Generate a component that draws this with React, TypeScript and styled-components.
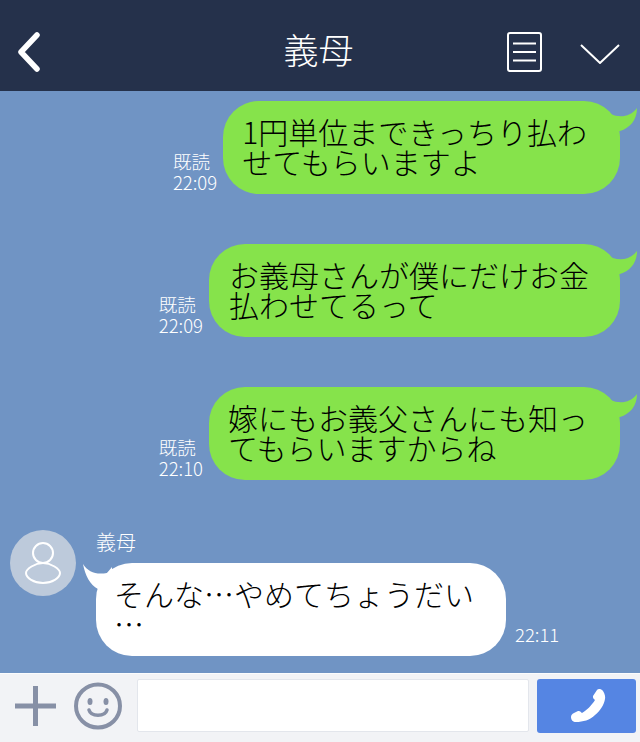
import React from 'react'
import styled, { createGlobalStyle } from 'styled-components'

const GlobalStyle = createGlobalStyle`
  html, body { margin: 0; padding: 0; }
  body { font-family: "Noto Sans CJK JP", "Noto Sans", sans-serif; background: #7094c4; }
`

const Screen = styled.div`
  width: 640px;
  height: 742px;
  display: flex;
  flex-direction: column;
  overflow: hidden;
`

const Header = styled.header`
  height: 91px;
  flex: none;
  box-sizing: border-box;
  background: #25314b;
  display: grid;
  grid-template-columns: 1fr auto 1fr;
  align-items: center;
  padding: 12px 20px 0 17px;
  color: #fff;
`

const Title = styled.div`
  font-size: 35px;
  font-weight: 300;
  line-height: 1;
  padding: 0 0 6px 0;
`

const HeaderIcons = styled.div`
  display: flex;
  justify-content: flex-end;
  align-items: center;
  gap: 38px;
`

const DownArrow = styled.svg`
  margin-top: 5px;
`

const Chat = styled.main`
  flex: 1;
  display: flex;
  flex-direction: column;
  gap: 50px;
  padding: 10px 0 0;
`

const MyRow = styled.div`
  display: flex;
  justify-content: flex-end;
  align-items: flex-end;
  gap: 6px;
  padding-right: 20px;
`

const Meta = styled.div`
  color: #fff;
  font-size: 18.5px;
  line-height: 21px;
  font-weight: 300;
  padding-bottom: 1px;
`

const Bubble = styled.div<{ $mine?: boolean; $left: number; $right: number }>`
  position: relative;
  background: ${p => (p.$mine ? '#86e34b' : '#fff')};
  color: #000;
  font-size: 30px;
  line-height: 30px;
  font-weight: 300;
  height: 93px;
  box-sizing: border-box;
  padding: 15px ${p => p.$right}px 0 ${p => p.$left}px;
  border-radius: 36px;
  white-space: nowrap;
`

const Tail = styled.svg<{ $mine?: boolean }>`
  position: absolute;
  ${p => (p.$mine ? 'top: 4px; right: -20px;' : 'top: 0; left: -14px;')}
`

const TheirRow = styled.div`
  display: flex;
  gap: 20px;
  padding-left: 10px;
`

const Avatar = styled.div`
  width: 66px;
  height: 66px;
  flex: none;
  border-radius: 50%;
  background: #bdcadb;
  display: flex;
  align-items: center;
  justify-content: center;
`

const TheirColumn = styled.div`
  display: flex;
  flex-direction: column;
`

const Name = styled.div`
  color: #fff;
  font-size: 20px;
  line-height: 24px;
  height: 33px;
  font-weight: 300;
`

const BubbleLine = styled.div`
  display: flex;
  align-items: flex-end;
  gap: 9px;
`

const TheirTime = styled(Meta)`
  padding-bottom: 11px;
`

const Footer = styled.footer`
  height: 69px;
  flex: none;
  box-sizing: border-box;
  background: #f2f3f6;
  border-top: 1px solid #fbfcfd;
  display: flex;
  align-items: center;
  padding: 0 4px 5px 15px;
`

const Input = styled.div`
  width: 392px;
  height: 53px;
  background: #fff;
  border: 1px solid #e3e6ec;
  box-sizing: border-box;
  border-radius: 2px;
  margin-left: 15px;
`

const CallButton = styled.div`
  width: 99px;
  height: 54px;
  margin: 1px 0 0 8px;
  padding-left: 3px;
  box-sizing: border-box;
  background: #5585e3;
  border-radius: 3px;
  display: flex;
  align-items: center;
  justify-content: center;
`

const Smile = styled.svg`
  margin-left: 18px;
`

const MineTail = () => (
  <Tail $mine width="40" height="30" viewBox="0 0 40 30">
    <path d="M2 3 C12 13 28 15 37 3 C37 15 30 23 20 26 L2 26 Z" fill="#86e34b" />
  </Tail>
)

const messages = [
  { time: '22:09', left: 19, right: 33, lines: ['1円単位まできっちり払わ', 'せてもらいますよ'] },
  { time: '22:09', left: 20, right: 31, lines: ['お義母さんが僕にだけお金', '払わせてるって'] },
  { time: '22:10', left: 19, right: 32, lines: ['嫁にもお義父さんにも知っ', 'てもらいますからね'] },
]

const App: React.FC = () => (
  <Screen>
    <GlobalStyle />
    <Header>
      <svg width="24" height="40" viewBox="0 0 24 40">
        <path d="M20 3 L4 20 L20 37" fill="none" stroke="#fff" strokeWidth="5.5" strokeLinecap="round" strokeLinejoin="round" />
      </svg>
      <Title>義母</Title>
      <HeaderIcons>
        <svg width="35" height="40" viewBox="0 0 35 40">
          <rect x="1" y="1" width="33" height="38" rx="2" fill="none" stroke="#fff" strokeWidth="2" />
          <path d="M6 11.5 H29 M6 20 H29 M6 28.5 H29" stroke="#fff" strokeWidth="2" />
        </svg>
        <DownArrow width="40" height="20" viewBox="0 0 40 20">
          <path d="M1 1 L20 19 L39 1" fill="none" stroke="#fff" strokeWidth="2" />
        </DownArrow>
      </HeaderIcons>
    </Header>
    <Chat>
      {messages.map(m => (
        <MyRow key={m.lines[0]}>
          <Meta>
            既読
            <br />
            {m.time}
          </Meta>
          <Bubble $mine $left={m.left} $right={m.right}>
            {m.lines[0]}
            <br />
            {m.lines[1]}
            <MineTail />
          </Bubble>
        </MyRow>
      ))}
      <TheirRow>
        <Avatar>
          <svg width="36" height="42" viewBox="0 0 36 42">
            <circle cx="18" cy="11" r="10" fill="none" stroke="#fff" strokeWidth="2" />
            <path d="M18 21 C10 21 1 27 1 31 C1 36 9 41 18 41 C27 41 35 36 35 31 C35 27 26 21 18 21 Z" fill="none" stroke="#fff" strokeWidth="2" />
          </svg>
        </Avatar>
        <TheirColumn>
          <Name>義母</Name>
          <BubbleLine>
            <Bubble $left={18} $right={32}>
              そんな…やめてちょうだい
              <br />…
              <Tail width="30" height="28" viewBox="0 0 30 28">
                <path d="M1 1 C6 9 14 12 25 10 L30 4 L30 28 L16 26 C8 22 3 12 1 1 Z" fill="#fff" />
              </Tail>
            </Bubble>
            <TheirTime>22:11</TheirTime>
          </BubbleLine>
        </TheirColumn>
      </TheirRow>
    </Chat>
    <Footer>
      <svg width="41" height="40" viewBox="0 0 41 40">
        <path d="M20.5 0 V40 M0 20 H41" stroke="#8790a6" strokeWidth="5" />
      </svg>
      <Smile width="48" height="48" viewBox="0 0 48 48">
        <ellipse cx="24" cy="24" rx="22" ry="21.5" fill="none" stroke="#8790a6" strokeWidth="4" />
        <ellipse cx="16" cy="19.5" rx="2.5" ry="3.5" fill="#8790a6" />
        <ellipse cx="32" cy="19.5" rx="2.5" ry="3.5" fill="#8790a6" />
        <path d="M15 28 C17 35 31 35 33 28" fill="none" stroke="#8790a6" strokeWidth="3.5" strokeLinecap="round" />
      </Smile>
      <Input />
      <CallButton>
        <svg width="36" height="36" viewBox="0 0 36 36">
          <path d="M33 3 C35 6 35.5 9 35 11 C34 17 30 23 25 27 C20 32 13 34 6 34 C3 34 1 32 1 29 C1 27 2 26 4 25 L8 23 C10 22.5 11 24 12 25 C16 23 22 17 25 12 C24 11 22.5 10 23 8 L27 2 C28 0.5 31 0.5 33 3 Z" fill="#fff" />
        </svg>
      </CallButton>
    </Footer>
  </Screen>
)

export default App
